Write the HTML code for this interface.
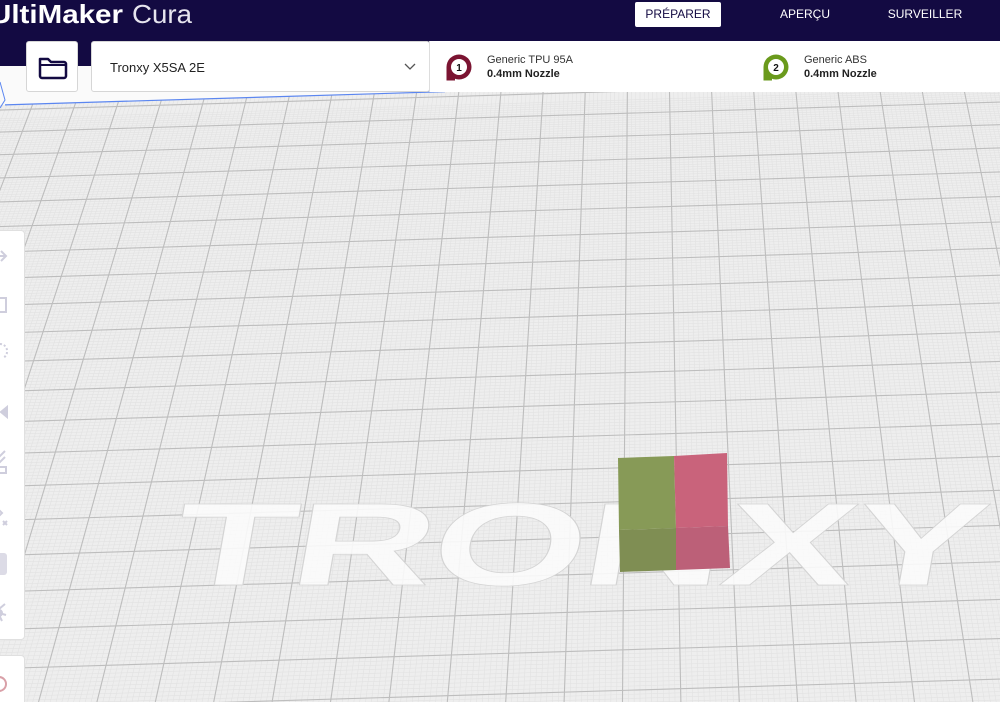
<!DOCTYPE html>
<html><head><meta charset="utf-8"><style>
*{margin:0;padding:0;box-sizing:border-box}
html,body{width:1000px;height:702px;overflow:hidden}
body{position:relative;background:#fafafa;font-family:"Liberation Sans",sans-serif}
#hdr{position:absolute;left:0;top:0;width:1000px;height:41px;background:#130a42}
#hdr2{position:absolute;left:0;top:41px;width:430px;height:25px;background:#130a42}
.tab{position:absolute;top:2px;height:25px;line-height:25px;font-size:12px;color:#fff;text-align:center}
.tab.act{background:#fff;color:#130a42;border-radius:2px}
.box{position:absolute;background:#fff;border:1px solid #d6d6d6;border-radius:3px}
.ext{position:absolute;top:41px;left:429px;width:571px;height:51px;background:#fff;border-left:1px solid #ddd}
.et{position:absolute;font-size:11px;color:#333;line-height:14px}
.et b{display:block;font-size:11px;color:#222}
</style></head><body>
<svg id="g" width="1000" height="702" style="position:absolute;left:0;top:0">
</svg>
<div id="hdr"></div><div id="hdr2"></div>
<svg width="220" height="40" style="position:absolute;left:0;top:0"><text x="-10" y="23" font-family="Liberation Sans" font-weight="bold" font-size="26" fill="#fff" textLength="133" lengthAdjust="spacingAndGlyphs">UltiMaker</text><text x="132" y="23" font-family="Liberation Sans" font-size="26" fill="#e6e4ee" textLength="60" lengthAdjust="spacingAndGlyphs">Cura</text></svg>
<div class="tab act" style="left:635px;width:86px">PRÉPARER</div>
<div class="tab" style="left:765px;width:80px">APERÇU</div>
<div class="tab" style="left:880px;width:90px">SURVEILLER</div>
<div class="box" style="left:26px;top:41px;width:52px;height:51px">
<svg width="52" height="51" style="position:absolute;left:-1px;top:-1px"><path d="M14 18 h8 l3 3 h13 a2 2 0 0 1 2 2 v12 a2 2 0 0 1 -2 2 h-22 a2 2 0 0 1 -2 -2 z" fill="none" stroke="#130a42" stroke-width="2.5" stroke-linejoin="round"/><path d="M14 24 h26" stroke="#130a42" stroke-width="2"/></svg></div>
<div class="box" style="left:91px;top:41px;width:339px;height:51px">
<div style="position:absolute;left:18px;top:18px;font-size:13px;color:#222">Tronxy X5SA 2E</div>
<svg width="14" height="10" style="position:absolute;left:311px;top:20px"><path d="M2 2 l5 5 l5 -5" fill="none" stroke="#555" stroke-width="1.3"/></svg></div>
<div class="ext">
<svg width="32" height="34" style="position:absolute;left:14px;top:11px"><circle cx="15" cy="15" r="12.5" fill="#7b1432"/><path d="M4 15 v12 h7" fill="#7b1432" stroke="#7b1432" stroke-width="3"/><circle cx="15" cy="15" r="8" fill="#fff"/><text x="15" y="19" font-size="10" font-weight="bold" text-anchor="middle" fill="#111" font-family="Liberation Sans">1</text></svg>
<div class="et" style="left:57px;top:12px">Generic TPU 95A<b>0.4mm Nozzle</b></div>
<svg width="32" height="34" style="position:absolute;left:331px;top:11px"><circle cx="15" cy="15" r="12.5" fill="#6a9a1c"/><path d="M4 15 v12 h7" fill="#6a9a1c" stroke="#6a9a1c" stroke-width="3"/><circle cx="15" cy="15" r="8" fill="#fff"/><text x="15" y="19" font-size="10" font-weight="bold" text-anchor="middle" fill="#111" font-family="Liberation Sans">2</text></svg>
<div class="et" style="left:374px;top:12px">Generic ABS<b>0.4mm Nozzle</b></div>
</div>
<div style="position:absolute;left:-5px;top:230px;width:30px;height:410px;background:#fff;border:1px solid #e0e0e0;border-radius:4px">
<svg width="30" height="410" style="position:absolute;left:0;top:0" fill="none" stroke="#cfcedd" stroke-width="2">
<path d="M0 25 h10 M5 20 l5 5 l-5 5 M2 18 v14"/>
<rect x="-2" y="67" width="12" height="14"/>
<path d="M4 113 a7 7 0 0 1 7 8 a7 7 0 0 1 -4 6" stroke-dasharray="2 2"/>
<path d="M11 176 l-6 5 l6 5 z" fill="#cfcedd"/><path d="M2 170 v22" stroke-dasharray="2 2"/>
<path d="M3 226 l6 -6 M3 232 l6 -6"/><rect x="3" y="236" width="7" height="6"/>
<path d="M0 276 l6 6 l-6 6 M7 290 l4 4 M11 290 l-4 4"/>
<rect x="-2" y="322" width="13" height="22" rx="3" fill="#dcdbe6" stroke="none"/>
<path d="M3 378 l6 -5 M3 382 l7 2 M3 384 l3 6"/><circle cx="3" cy="382" r="3" fill="#cfcedd"/>
</svg></div>
<div style="position:absolute;left:-5px;top:655px;width:30px;height:47px;background:#fff;border:1px solid #e0e0e0;border-bottom:none;border-radius:4px 4px 0 0">
<svg width="30" height="40" style="position:absolute;left:0;top:0"><circle cx="3" cy="28" r="7" fill="none" stroke="#d9a0a8" stroke-width="2"/></svg></div>
<script>
var s='',H=-1490,VX=640,F=114490;
function ey(x){return 105-0.03*x;}
s+='<polygon points="0,'+ey(0)+' 1000,'+ey(1000)+' 1000,702 0,702" fill="#eeeeee"/>';
var tMin=F/(740-H),tMax=F/(95-H);
for(var t=Math.floor(tMin*10)/10;t<=tMax;t+=0.1){var y=H+F/(t+0.03);var a=y+0.03*790;s+='<line x1="0" y1="'+(a)+'" x2="1000" y2="'+(a-30)+'" stroke="#e2e2e2" stroke-width="0.6"/>';}
for(var k=-30;k<=20;k+=0.1){var kk=k+0.7;var x1=VX+kk*0.02664*(80-H),x2=VX+kk*0.02664*(702-H);s+='<line x1="'+x1+'" y1="80" x2="'+x2+'" y2="702" stroke="#e2e2e2" stroke-width="0.6"/>';}
for(var n=Math.floor(tMin);n<=tMax+1;n++){var t=n+0.63;var y=H+F/t;var a=y+0.03*790;s+='<line x1="0" y1="'+a+'" x2="1000" y2="'+(a-30)+'" stroke="#bdbdbd" stroke-width="1.1"/>';}
for(var k=-30;k<=20;k++){var kk=k+0.7;var x1=VX+kk*0.02664*(80-H),x2=VX+kk*0.02664*(702-H);s+='<line x1="'+x1+'" y1="80" x2="'+x2+'" y2="702" stroke="#bdbdbd" stroke-width="1.1"/>';}
s+='<polygon points="0,0 1000,0 1000,'+ey(1000)+' 0,'+ey(0)+'" fill="#fafafa"/>';
s+='<polyline points="0,82 5,100 0,108" fill="none" stroke="#5b86f0" stroke-width="1"/>';
s+='<line x1="5" y1="'+ey(5)+'" x2="445" y2="'+ey(445)+'" stroke="#5b86f0" stroke-width="1.2"/>';
s+='<g transform="translate(168,585) skewX(-10) scale(1.55,0.92)"><text x="0" y="0" font-family="Liberation Sans" font-weight="bold" font-size="128" fill="#fbfbfb" fill-opacity="0.9" stroke="#d4d4d4" stroke-width="0.8" letter-spacing="-2">TRONXY</text></g>';
s+='<polygon points="618,458 674,456 676,528 619,530" fill="#879a57"/>';
s+='<polygon points="619,530 676,528 676,570 620,572" fill="#7f8e53"/>';
s+='<polygon points="674,456 727,453 728,526 676,528" fill="#c9637b"/>';
s+='<polygon points="676,528 728,526 730,568 676,570" fill="#bc6078"/>';
document.getElementById('g').innerHTML=s;
</script>
</body></html>
